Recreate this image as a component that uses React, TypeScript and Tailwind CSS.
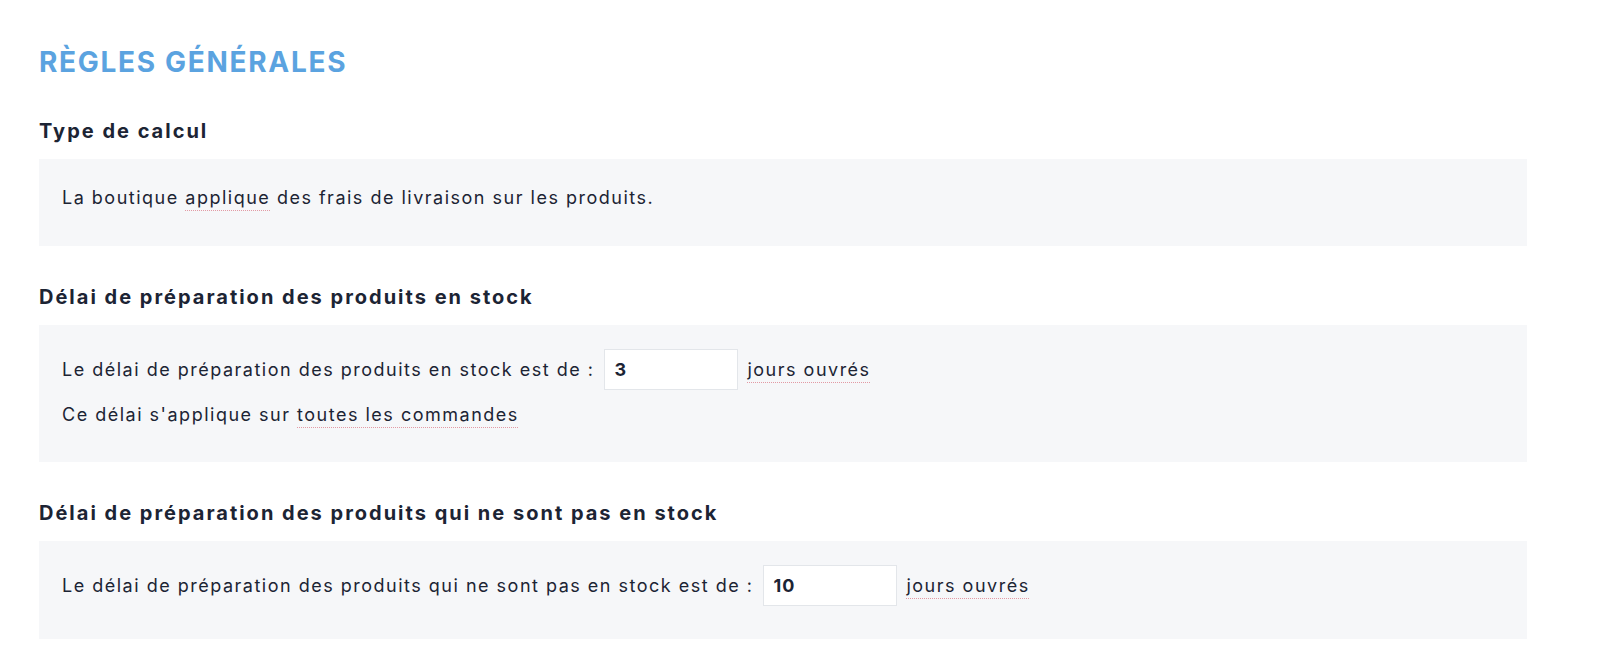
import React from 'react';

const FONT = { fontFamily: 'Inter, "Noto Sans", sans-serif' };

// dotted link-like term
function Term({ children }: { children: React.ReactNode }) {
  return (
    <span className="underline decoration-dotted decoration-[#e29aa4] decoration-1 underline-offset-[6px]">
      {children}
    </span>
  );
}

function NumberInput({ value }: { value: string }) {
  return (
    <input
      type="text"
      defaultValue={value}
      className="ml-[10px] mr-[9px] h-[41px] w-[134px] border border-[#e3e6ea] bg-white px-[9px] text-[18px] font-bold tracking-[1px] text-[#1c2434] outline-none"
      style={FONT}
    />
  );
}

function Section({ title, children }: { title: string; children: React.ReactNode }) {
  return (
    <section className="mb-[37px]">
      <h3 className="mb-[14px] text-[20px] font-bold leading-[28px] tracking-[2px] text-[#1c2434]">{title}</h3>
      <div className="bg-[#f6f7f9] px-[23px] pt-[24px] pb-[33px] text-[18px] tracking-[1.5px] text-[#1c2434]">
        {children}
      </div>
    </section>
  );
}

export default function App() {
  return (
    <div className="min-h-screen bg-white pl-[39px] pr-[73px] pt-[47px]" style={FONT}>
      <h2 className="mb-[40px] text-[28px] font-bold leading-[30px] tracking-[1.7px] text-[#5ba3e0]">
        RÈGLES GÉNÉRALES
      </h2>

      <Section title="Type de calcul">
        <p className="leading-[30px]">
          La boutique <Term>applique</Term> des frais de livraison sur les produits.
        </p>
      </Section>

      <Section title="Délai de préparation des produits en stock">
        <div className="flex h-[41px] items-center">
          <span>Le délai de préparation des produits en stock est de :</span>
          <NumberInput value="3" />
          <Term>jours ouvrés</Term>
        </div>
        <p className="mt-[11px] leading-[28px]">
          Ce délai s'applique sur <Term>toutes les commandes</Term>
        </p>
      </Section>

      <Section title="Délai de préparation des produits qui ne sont pas en stock">
        <div className="flex h-[41px] items-center">
          <span>Le délai de préparation des produits qui ne sont pas en stock est de :</span>
          <NumberInput value="10" />
          <Term>jours ouvrés</Term>
        </div>
      </Section>
    </div>
  );
}
